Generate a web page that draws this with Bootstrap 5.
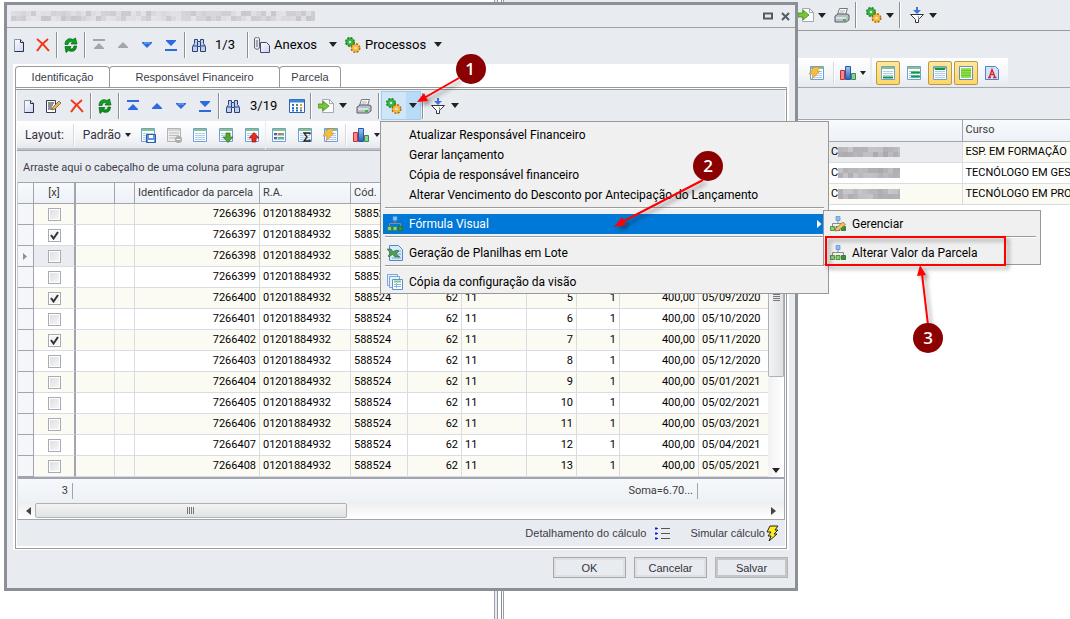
<!DOCTYPE html>
<html lang="pt-BR">
<head>
<meta charset="utf-8">
<meta name="viewport" content="width=device-width, initial-scale=1">
<title>Parcelas</title>
<link href="https://cdn.jsdelivr.net/npm/bootstrap@5.3.0/dist/css/bootstrap.min.css" rel="stylesheet">
<style>
:root{--face:#e8ebf0;--line:#a0a5b0;--cell:#d9dce1;--ui:Roboto,"Noto Sans",sans-serif}
body{font:11px/16px var(--ui);color:#000;background:#fff;overflow-x:hidden}
.desk{min-height:100vh;position:relative}
button{font:inherit;color:inherit;border:0;background:none;padding:0}
svg.ic{width:16px;height:16px;display:block;flex:none}
/* toolbars */
.tool{width:24px;height:24px;display:flex;align-items:center;justify-content:center;flex:none}
.tool.wide{width:26px}
.tool.off{color:#a3a6ab}
.nav-blue{color:#2f6be0}
.vsep{width:2px;height:26px;margin:0 1px;background:#8b8f96;border-right:1px solid #fff;flex:none}
.vsep.soft{height:22px;background:#d5d8dd}
.tri{width:0;height:0;border:4px solid transparent;border-top:5px solid #222;border-bottom:0;flex:none}
.tri.sm{border-width:3px;border-top-width:4px;border-bottom-width:0}
.big{font-size:13px;line-height:16px}
.count-a{width:35px;padding-left:4px}
.count-b{width:40px;padding-left:5px}
.strip{background:linear-gradient(#fff,#f4f5f8 60%,#e6e9ef);height:29px;border-bottom:2px solid #bfc3cb;color:#33333c}
.strip .cap{font-size:12px}
.strips{gap:1px}
.tight{gap:2px}
.tool.on{border:1px solid #b99a4c;border-radius:2px;background:linear-gradient(#ffe79a,#ffd566)}
/* background application */
.app-face{background:var(--face)}
.left-pane{flex:0 0 494px}
.split{flex:0 0 10px;border-left:1px solid #9a9fa9;border-right:1px solid #9a9fa9;background:linear-gradient(90deg,#e8ebf0 2px,#8f96a5 2px,#8f96a5 3px,#fff 3px,#fff 6px,#8f8f8f 6px,#8f8f8f 7px,#fff 7px)}
.app-top{height:31px;border-bottom:1px solid #999;padding-left:290px}
.app-mid{height:89px;border-bottom:1px solid var(--line);padding:27px 0 0 293px}
.app-tools{border-bottom:1px solid #a3a6ab}
.app-tools .strip{border-bottom:0}
.app-grid{table-layout:fixed;width:100%}
.app-grid td,.app-grid th{height:21px;padding:0 3px;border-right:1px solid var(--cell);border-bottom:1px solid var(--cell);white-space:nowrap;overflow:hidden;font-weight:400}
.app-grid td:last-child,.app-grid th:last-child{border-right:0;padding-right:0}
.app-grid th,.grid th{background:linear-gradient(#f8fafc,#edf1f6);border-color:var(--line);color:#3b3b3b}
.app-grid .first{background:#ebecef}
.alt{background:#fbfbf3}
.app-grid td:first-child{padding-left:327px}
/* dialog window */
.win{position:absolute;left:4px;top:2px;width:794px;max-width:100%;border:3px solid #8a9096;background:var(--face)}
.win-title{height:23px;border-bottom:1px solid #a0a0a0}
.win-bar{height:36px;padding-bottom:3px}
.tabs-box{margin:0 6px;padding:2px 2px 1px;background:#fff}
.tabs-box .nav-tabs{border:0}
.tabs-box .nav-link{font:11px/20px "Liberation Sans",Arial,sans-serif;color:#3c3c4a;border:1px solid #999;border-bottom:0;border-radius:4px 4px 0 0;padding:0;height:21px;margin:0 0 0 -1px;background:#fff;text-align:center}
.tabs-box .nav-item:first-child .nav-link{margin-left:0}
.w-a{width:95px}.w-b{width:171px}.w-c{width:62px}
.sheet{border:1px solid #999;border-top:3px double #999;padding:0 1px 2px}
.sheet-in{background:var(--face)}
.bar2{height:31px}
.drop-on{background:#cfe6f9;border:1px solid #a3cdef;height:29px;width:40px;position:relative}
.drop-on .half{background:#b8dcf8;width:15px;height:27px}
.group-hint{height:32px;border-top:1px solid var(--line);padding:9px 6px 0;color:#3b3b4a}
/* parcel grid */
.grid-box{border:1px solid var(--line);border-left-color:#c6cad2;background:#fff}
.grid{table-layout:fixed;width:100%;border-collapse:separate;border-spacing:0}
.grid td,.grid th{height:21px;padding:0 3px;border-right:1px solid var(--cell);border-bottom:1px solid var(--cell);line-height:20px;white-space:nowrap;overflow:hidden;font-weight:400}
.grid th{height:21px;border-color:var(--line)}
.grid td:first-child{background:#f4f6f9;border-color:var(--line)}
.grid td:nth-child(2),.grid th:nth-child(2){border-right:2px solid var(--line)}
.grid tr.cur td:nth-child(2){background:#ebecef}
.grid td:last-child{border-right:0}
.grid input{appearance:none;display:block;margin:0 auto;width:13px;height:13px;border:1px solid #a7abb3;background:linear-gradient(135deg,#dcdde0,#f8f8f8);box-shadow:inset 0 0 0 1px #fff}
.grid input:checked{background:#f4f4f4 url("data:image/svg+xml,%3Csvg xmlns='http://www.w3.org/2000/svg' viewBox='0 0 11 11'%3E%3Cpath d='M2 5l2.5 3.5L9 2' fill='none' stroke='%23333' stroke-width='2'/%3E%3C/svg%3E")}
.vbar{width:16px;margin-top:21px;background:linear-gradient(90deg,#f1f1f1,#fff);flex:none}
.vthumb{height:173px;border:1px solid #aeb2b8;border-top:0;border-radius:0 0 2px 2px;background:linear-gradient(90deg,#f4f4f4,#dfe1e3)}
.grip-v{width:7px;height:8px;margin-top:90px;background:repeating-linear-gradient(#777 0 1px,transparent 1px 2px)}
.grip-h{width:8px;height:7px;background:repeating-linear-gradient(90deg,#777 0 1px,transparent 1px 2px)}
.sums{height:25px;border-top:2px solid var(--line);background:linear-gradient(#f6f8fb,#edf1f6);color:#3b3b3b}
.sums span{border-right:1px solid #a0a5b0;height:16px;text-align:right;padding-right:4px}
.s-a{width:55px}.s-b{width:90px;margin-right:86px}
.hbar{height:17px;background:linear-gradient(#eee,#fff)}
.hthumb{width:312px;height:15px;border:1px solid #aeb2b8;border-radius:2px;background:linear-gradient(#f3f4f2,#e0e3e4)}
.arr{width:0;height:0;border:4px solid transparent}
.arr-l{border-right:5px solid #444;border-left:0}
.arr-r{border-left:5px solid #444;border-right:0}
.foot{font:11px/16px "Liberation Sans",Arial,sans-serif;color:#3c3c4a;height:26px}
.win-foot{height:38px;padding:7px 7px 0;font:11px/16px "Liberation Sans",Arial,sans-serif}
.push{width:73px;height:21px;border:1px solid #a9a9a9;box-shadow:inset 0 0 0 2px #dfdfdf;color:#33333c}
.push.strong{box-shadow:inset 0 0 0 2px #c6c6c6;border-color:#b5b5b5}
/* menus */
.pop{display:block;background:#f0f0f0;border:1px solid #999;border-radius:0;padding:3px 2px 1px;font:12px/20px Roboto,sans-serif;color:#000;margin:0}
.pop .dropdown-item{height:20px;padding:0 4px;display:flex;align-items:center;gap:6px;color:#000;line-height:20px;position:relative}
.pop .dropdown-item.pick{background:#0078d7;color:#fff}
.pop .blank{width:16px;flex:none}
.pop hr{margin:2px 2px 5px;border:0;border-top:1px solid #9b9b9b;border-bottom:1px solid #fff;opacity:1;height:2px}
.pop-main{position:absolute;left:-2px;top:29px;width:449px}
.pop-sub{position:absolute;left:442px;top:88px;width:218px;min-width:0}
.marks{position:absolute;left:0;top:0;width:1070px;height:619px;pointer-events:none;z-index:2000}
.marks text{font:600 17px "Open Sans",sans-serif;fill:#fff;text-anchor:middle}
.win,.dropdown-menu{z-index:10}
</style>
</head>
<body>
<svg width="0" height="0" class="position-absolute" aria-hidden="true"><defs>
<linearGradient id="gb" x2="0" y2="1"><stop stop-color="#9cc8f4"/><stop offset="1" stop-color="#2c5fc0"/></linearGradient>
<linearGradient id="pg" x2="1" y2="1"><stop stop-color="#fff"/><stop offset="1" stop-color="#c9d3ee"/></linearGradient>
<symbol id="new" viewBox="0 0 16 16"><path d="M3.500 2.500h6l3 3v9h-9z" fill="url(#pg)" stroke="#8a94ad"/><path d="M9.500 2.500v3h3M12.500 5v9.500h-9" fill="none" stroke="#27304e"/></symbol>
<symbol id="edit" viewBox="0 0 16 16"><path d="M1.500 2.500h9v12h-9z" fill="#fff" stroke="#333b58"/><path d="M3 5h6M3 7h5M3 9h4M3 11h5" stroke="#222"/><path d="M7 12l1-3 6-6 2 2-6 6z" fill="#e8b35a" stroke="#70502a" stroke-width=".7"/></symbol>
<symbol id="del" viewBox="0 0 16 16"><path d="M2 2c4 3 8 7 12 12M13 2C9 5 5 9 2 14" fill="none" stroke="#f03818" stroke-width="2"/></symbol>
<symbol id="refresh" viewBox="0 0 16 16"><path d="M2 7.500C2 2.500 6 .5 10 2.500L12.500 1l1.500 6H8l1.500-2C7.500 4 5.500 5 5 7.500z" fill="#0aa31d" stroke="#075f10" stroke-width=".7"/><path d="M13.500 9c0 5-4 6.500-8 4.500L3 15.500 2 9.500h6l-1.500 2c2 1 4 0 4.500-2.500z" fill="#08951a" stroke="#075f10" stroke-width=".7"/></symbol>
<symbol id="up" viewBox="0 0 16 16"><path d="M8 5l5 5v1H3v-1z" fill="currentColor"/></symbol>
<symbol id="down" viewBox="0 0 16 16"><path d="M8 11l5-5V5H3v1z" fill="currentColor"/><path d="M5 6h6" stroke="#8ab8f5"/></symbol>
<symbol id="first" viewBox="0 0 16 16"><path d="M2 2h12v2H2zM8 6l5 5v1H3v-1z" fill="currentColor"/></symbol>
<symbol id="last" viewBox="0 0 16 16"><path d="M2 12h12v2H2zM3 3h10v1L8 9 3 4z" fill="currentColor"/></symbol>
<symbol id="binoc" viewBox="0 0 16 16"><path d="M3.500 2.500h3v2h3v-2h3v4l2 3v5h-5v-5h-3v5h-5v-5l2-3z" fill="#bdd1ef" stroke="#283f7c"/><path d="M6.500 5v4M9.500 5v4M2 9h4M10 9h4" stroke="#283f7c"/></symbol>
<symbol id="clip" viewBox="0 0 16 16"><path d="M6.500 5.500h6l3 3v7h-9z" fill="url(#pg)" stroke="#4d4470"/><path d="M.5 2v8c0 3 5 3 5 0V2c0-2.500-5-2.500-5 0M3 3v7" fill="#e6eaf0" stroke="#61656c"/></symbol>
<symbol id="gears" viewBox="0 0 16 16"><circle cx="5" cy="5" r="2.800" fill="none" stroke="#35b53c" stroke-width="3"/><circle cx="5" cy="5" r="4.300" fill="none" stroke="#1d7b22" stroke-width="1.400" stroke-dasharray="2 1.400"/><circle cx="10.500" cy="11" r="2.800" fill="none" stroke="#f7ba38" stroke-width="3"/><circle cx="10.500" cy="11" r="4.300" fill="none" stroke="#a86a11" stroke-width="1.400" stroke-dasharray="2 1.400"/></symbol>
<symbol id="cal" viewBox="0 0 16 16"><path d="M.5 1.500h15v13H.5z" fill="#fff" stroke="#2a63ac"/><path d="M1 3h14" stroke="#3d86d8" stroke-width="3"/><path d="M3 7h2M3 10h2M3 12.500h2M7 12.500h2M11 12.500h2" stroke="#3266d5" stroke-width="2"/><path d="M7 7h2M7 10h2" stroke="#24a04a" stroke-width="2"/><path d="M11 7h2M11 10h2" stroke="#e8963a" stroke-width="2"/></symbol>
<symbol id="export" viewBox="0 0 16 16"><path d="M4.500 1.500h7l4 4v9h-11z" fill="#fafbfc" stroke="#a4a9b0"/><path d="M11.500 1.500v4h4" fill="none" stroke="#a4a9b0"/><path d="M0 6h5V3l6 5-6 5v-3H0z" fill="#77c633" stroke="#468f19" stroke-width=".8"/></symbol>
<symbol id="print" viewBox="0 0 16 16"><path d="M5.500 1.500h8l-2 6h-8z" fill="#fff" stroke="#777"/><path d="M6 4h5M5 6h5" stroke="#aaa"/><path d="M1 9l3-2h9l2 1v5l-3 2H1z" fill="#b9bfc7" stroke="#5b626d"/><path d="M2 11h10" stroke="#fff"/><path d="M9 13h3" stroke="#26c43a" stroke-width="2"/></symbol>
<symbol id="funnel" viewBox="0 0 16 16"><path d="M1.500 7.500h13l-5 5v3h-3v-3z" fill="#fff" stroke="#333"/><path d="M9 9l1 3" stroke="#888"/><path d="M7 0h2v3h3L8 7 4 3h3z" fill="#3b74dd"/></symbol>
<symbol id="tb" viewBox="0 0 16 16"><path d="M1.500 1.500h13v13h-13z" fill="#fff" stroke="#6f9fd6"/><path d="M2 3h12" stroke="#86c67b" stroke-width="2"/><path d="M3 6.500h10M3 8.500h10M3 10.500h10M3 12.500h10" stroke="#a9c6e8"/><path d="M6 6v8M10 6v8" stroke="#d5e3f4"/></symbol>
<symbol id="save" viewBox="0 0 16 16"><use href="#tb"/><path d="M6.500 7.500h9v8h-9z" fill="#5f93d8" stroke="#2b5ca5"/><path d="M9 8h4v3H9zM8 13h6v2H8z" fill="#fff"/></symbol>
<symbol id="tbdel" viewBox="0 0 16 16"><path d="M1.500 1.500h13v13h-13z" fill="#eee" stroke="#b4b4b4"/><path d="M2 3h12M3 6h10M3 8.500h10M3 11h8" stroke="#bbb"/><circle cx="12.500" cy="12.500" r="3.500" fill="#aaa"/><path d="M10.500 12.500h4" stroke="#fff"/></symbol>
<symbol id="tbdn" viewBox="0 0 16 16"><use href="#tb"/><path d="M8 6h4v4h3l-5 5.500L5 10h3z" fill="#55a636" stroke="#2e7418" stroke-width=".7"/></symbol>
<symbol id="tbup" viewBox="0 0 16 16"><use href="#tb"/><path d="M8 15h4v-4h3l-5-5.500L5 11h3z" fill="#e32b20" stroke="#98140e" stroke-width=".7"/></symbol>
<symbol id="tbcol" viewBox="0 0 16 16"><use href="#tb"/><path d="M3 7h3M3 11h3" stroke="#253a66" stroke-width="1.500"/><path d="M7 7h3" stroke="#e03636" stroke-width="1.500"/><path d="M10 7h3M7 11h6" stroke="#35a954" stroke-width="1.500"/></symbol>
<symbol id="sum" viewBox="0 0 16 16"><use href="#tb"/><path d="M13 7.500V6H7l3 4-3 4h6v-1.500" fill="none" stroke="#222" stroke-width="1.300"/></symbol>
<symbol id="flash" viewBox="0 0 16 16"><use href="#tb"/><path d="M5 2h6L8 6h3l-8 8 1-5H0z" fill="#f6bd45" stroke="#c88a1c" stroke-width=".6"/></symbol>
<symbol id="bars" viewBox="0 0 16 16"><path d="M.5 5.500h4v9h-4z" fill="#f08a8a" stroke="#c93030"/><path d="M5.500 1.500h5v13h-5z" fill="url(#gb)" stroke="#2458a8"/><path d="M11.500 8.500h4v6h-4z" fill="#8ed09a" stroke="#3b8b4a"/></symbol>
<symbol id="tbbot" viewBox="0 0 16 16"><use href="#tb"/><path d="M3 12.500h10" stroke="#0c9a43" stroke-width="2"/></symbol>
<symbol id="tbmid" viewBox="0 0 16 16"><use href="#tb"/><path d="M5 7.500h9M5 11.500h9" stroke="#0c9a43" stroke-width="2"/></symbol>
<symbol id="tbtop" viewBox="0 0 16 16"><use href="#tb"/><path d="M3 4h10" stroke="#0c9a43" stroke-width="2"/></symbol>
<symbol id="tbfull" viewBox="0 0 16 16"><path d="M1.500 1.500h13v13h-13z" fill="#fff" stroke="#5d8fc8"/><path d="M3 3h10v10H3z" fill="#8fe04a"/><path d="M3 5.500h10M3 8h10M3 10.500h10" stroke="#6cc32f"/></symbol>
<symbol id="fontA" viewBox="0 0 16 16"><path d="M1.500 1.500h10l3 3v10h-13z" fill="#cfe3fa" stroke="#4f83c4"/><path d="M4 12.500h3M9 12.500h3.500M5.500 12L8 4.500l3 7.500M6.500 9.500h3" fill="none" stroke="#e02424" stroke-width="1.400"/></symbol>
<symbol id="tree" viewBox="0 0 16 16"><path d="M8 4v3M2.500 10V7.500h11V10" fill="none" stroke="#8a8a8a"/><path d="M6 .5h4v4H6z" fill="#8fbdf5" stroke="#5a8ccf" stroke-width=".7"/><path d="M.5 10.500h4v4h-4zM6 10.500h4v4H6z" fill="#8ccf6e" stroke="#3b8030" stroke-width=".8"/><path d="M11.500 10.500h4v4h-4z" fill="#37933a" stroke="#246b28" stroke-width=".8"/></symbol>
<symbol id="treepen" viewBox="0 0 16 16"><use href="#tree"/><path d="M5 15l1-3 7-6 2.500 2.500-7 6z" fill="#f2c26a" stroke="#9a6a22" stroke-width=".7"/></symbol>
<symbol id="excel" viewBox="0 0 16 16"><path d="M2.500.5h9l4 4v11h-13z" fill="#d9ebfb" stroke="#4f8ac8"/><path d="M5 13h9M9 6h5M10 9h4" stroke="#6ea4da"/><path d="M0 4h4l2 2.500L10 5l2 1-3 3 4 3H8L5.500 9.500 2 12l-1-1 2.500-3z" fill="#4f9c57" stroke="#20602a" stroke-width=".5"/></symbol>
<symbol id="copy" viewBox="0 0 16 16"><path d="M.5.500h10v11H.5z" fill="#e9f2fc" stroke="#7aa8de"/><path d="M2.500 2.500h10v11h-10z" fill="#e9f2fc" stroke="#7aa8de"/><path d="M5.500 5.500h10v10h-10z" fill="#fff" stroke="#5d90cf"/><path d="M7 7.500h7" stroke="#80c67c" stroke-width="2"/><path d="M7 10.500h7M7 12.500h7M9.500 9v5" stroke="#8db6e4"/></symbol>
<symbol id="list" viewBox="0 0 16 16"><path d="M2 2v3M2 7v3M2 12v3M1 3.500h3M1 8.500h3M1 13.500h3" stroke="#1717e0"/><path d="M7 3.500h9M7 8.500h9M7 13.500h9" stroke="#555"/></symbol>
<symbol id="bolt" viewBox="0 0 16 16"><path d="M5 1h8L10 5h3L9 9h3l-8 7 2-5H3l3-4H2z" fill="#ffec1e" stroke="#222"/></symbol>
</defs></svg>

<div class="desk d-flex">
  <div class="left-pane"></div>
  <div class="split"></div>
  <main class="flex-grow-1 overflow-hidden">
    <div class="app-face">
      <div class="app-top d-flex align-items-center">
        <button class="tool" data-ic="export" aria-label="Exportar"></button><span class="tri"></span>
        <button class="tool ms-1" data-ic="print" aria-label="Imprimir"></button><span class="vsep"></span>
        <button class="tool ms-1" data-ic="gears" aria-label="Processos"></button><span class="tri me-1"></span><span class="vsep me-1"></span>
        <button class="tool" data-ic="funnel" aria-label="Filtro"></button><span class="tri"></span>
      </div>
      <div class="app-mid">
        <div class="app-tools d-flex tight">
          <div class="strip d-flex align-items-center ps-2"><button class="tool" data-ic="flash" aria-label="Ação"></button><span class="vsep soft ms-1"></span><button class="tool" data-ic="bars" aria-label="Gráfico"></button><span class="tri sm me-1"></span></div>
          <div class="strip d-flex align-items-center tight px-1">
            <button class="tool on" data-ic="tbbot" aria-label="Rodapé"></button><button class="tool" data-ic="tbmid" aria-label="Grupo"></button><button class="tool on" data-ic="tbtop" aria-label="Topo"></button><button class="tool on" data-ic="tbfull" aria-label="Linhas"></button><button class="tool" data-ic="fontA" aria-label="Fonte"></button>
          </div>
        </div>
      </div>
    </div>
    <table class="app-grid"><colgroup><col style="width:458px"><col></colgroup>
      <thead><tr><th></th><th>Curso</th></tr></thead>
      <tbody>
        <tr><td class="first"><div class="d-flex">C<svg class="mosaic" data-w="62" data-h="10" width="62" height="10"></svg></div></td><td class="alt">ESP. EM FORMAÇÃO</td></tr>
        <tr><td><div class="d-flex">C<svg class="mosaic" data-w="62" data-h="10" width="62" height="10"></svg></div></td><td>TECNÓLOGO EM GEST</td></tr>
        <tr class="alt"><td><div class="d-flex">C<svg class="mosaic" data-w="62" data-h="10" width="62" height="10"></svg></div></td><td>TECNÓLOGO EM PRO</td></tr>
      </tbody></table>
  </main>

  <section class="win" role="dialog" aria-label="Parcela">
    <div class="win-title d-flex align-items-center justify-content-between ps-1 pe-1">
      <svg class="mosaic" data-w="304" data-h="10" width="304" height="10"></svg>
      <div class="d-flex gap-2 align-items-center">
        <button aria-label="Maximizar"><svg width="10" height="9" class="d-block"><path d="M1 1.500h8v5H1z" fill="none" stroke="#555c66" stroke-width="2"/></svg></button>
        <button aria-label="Fechar"><svg width="10" height="9" class="d-block"><path d="M1 1l7 7M8 1L1 8" stroke="#555c66" stroke-width="2"/></svg></button>
      </div>
    </div>
    <div class="win-bar d-flex align-items-center">
      <button class="tool" data-ic="new" aria-label="Novo"></button><button class="tool" data-ic="del" aria-label="Excluir"></button><span class="vsep"></span>
      <button class="tool" data-ic="refresh" aria-label="Atualizar"></button><span class="vsep"></span>
      <button class="tool off" data-ic="first" aria-label="Primeiro"></button><button class="tool off" data-ic="up" aria-label="Anterior"></button><button class="tool nav-blue" data-ic="down" aria-label="Próximo"></button><button class="tool nav-blue" data-ic="last" aria-label="Último"></button><span class="vsep"></span>
      <button class="tool" data-ic="binoc" aria-label="Localizar"></button><span class="big count-a">1/3</span><span class="vsep"></span>
      <button class="big d-flex align-items-center ms-1 gap-1" data-ic="clip"><span>Anexos</span><span class="tri ms-2 me-2"></span></button>
      <button class="big d-flex align-items-center gap-1" data-ic="gears"><span>Processos</span><span class="tri ms-1"></span></button>
    </div>
    <div class="tabs-box">
      <ul class="nav nav-tabs">
        <li class="nav-item"><a class="nav-link w-a" href="#">Identificação</a></li>
        <li class="nav-item"><a class="nav-link w-b" href="#">Responsável Financeiro</a></li>
        <li class="nav-item"><a class="nav-link w-c" href="#">Parcela</a></li>
      </ul>
      <div class="sheet"><div class="sheet-in">
        <div class="bar2 d-flex align-items-center">
          <button class="tool" data-ic="new" aria-label="Novo"></button><button class="tool" data-ic="edit" aria-label="Editar"></button><button class="tool" data-ic="del" aria-label="Excluir"></button><span class="vsep"></span>
          <button class="tool" data-ic="refresh" aria-label="Atualizar"></button><span class="vsep"></span>
          <button class="tool nav-blue" data-ic="first" aria-label="Primeiro"></button><button class="tool nav-blue" data-ic="up" aria-label="Anterior"></button><button class="tool nav-blue" data-ic="down" aria-label="Próximo"></button><button class="tool nav-blue" data-ic="last" aria-label="Último"></button><span class="vsep"></span>
          <button class="tool" data-ic="binoc" aria-label="Localizar"></button><span class="big count-b">3/19</span>
          <button class="tool" data-ic="cal" aria-label="Calendário"></button><span class="vsep"></span>
          <button class="tool wide" data-ic="export" aria-label="Exportar"></button><span class="tri"></span><button class="tool wide ms-1" data-ic="print" aria-label="Imprimir"></button><span class="vsep"></span>
          <div class="dropdown drop-on d-flex align-items-center justify-content-between">
            <button class="tool" data-ic="gears" aria-label="Processos"></button><button class="half d-flex align-items-center justify-content-center" aria-label="Abrir processos" aria-expanded="true"><span class="tri"></span></button>
            <div class="dropdown-menu pop pop-main">
              <a class="dropdown-item" href="#"><span class="blank"></span>Atualizar Responsável Financeiro</a>
              <a class="dropdown-item" href="#"><span class="blank"></span>Gerar lançamento</a>
              <a class="dropdown-item" href="#"><span class="blank"></span>Cópia de responsável financeiro</a>
              <a class="dropdown-item" href="#"><span class="blank"></span>Alterar Vencimento do Desconto por Antecipação do Lançamento</a>
              <hr>
              <a class="dropdown-item pick" href="#" data-ic="tree"><span>Fórmula Visual</span><svg class="ms-auto" width="5" height="8"><path d="M0 0l4.500 4L0 8z" fill="#fff"/></svg></a>
              <hr>
              <a class="dropdown-item" href="#" data-ic="excel"><span>Geração de Planilhas em Lote</span></a>
              <hr>
              <a class="dropdown-item" href="#" data-ic="copy"><span>Cópia da configuração da visão</span></a>
              <div class="dropdown-menu pop pop-sub">
                <a class="dropdown-item" href="#" data-ic="treepen"><span>Gerenciar</span></a>
                <hr>
                <a class="dropdown-item" href="#" data-ic="tree"><span>Alterar Valor da Parcela</span></a>
              </div>
            </div>
          </div>
          <span class="vsep"></span><button class="tool wide" data-ic="funnel" aria-label="Filtro"></button><span class="tri"></span>
        </div>
        <div class="d-flex strips">
          <div class="strip d-flex align-items-center ps-2">
            <span class="cap pe-2">Layout:</span><span class="vsep soft me-2"></span>
            <button class="d-flex align-items-center gap-1 me-1"><span class="cap">Padrão</span><span class="tri sm"></span></button>
            <button class="tool wide" data-ic="save" aria-label="Salvar layout"></button><button class="tool wide" data-ic="tbdel" aria-label="Excluir layout"></button><button class="tool wide" data-ic="tb" aria-label="Layout"></button><button class="tool wide" data-ic="tbdn" aria-label="Importar"></button><button class="tool wide" data-ic="tbup" aria-label="Exportar"></button>
          </div>
          <div class="strip d-flex align-items-center">
            <button class="tool wide" data-ic="tbcol" aria-label="Colunas"></button><button class="tool wide" data-ic="sum" aria-label="Somar"></button><button class="tool wide" data-ic="flash" aria-label="Ação"></button><span class="vsep soft"></span><button class="tool wide" data-ic="bars" aria-label="Gráfico"></button><span class="tri sm"></span>
          </div>
        </div>
        <div class="group-hint">Arraste aqui o cabeçalho de uma coluna para agrupar</div>
        <div class="grid-box">
          <div class="d-flex">
            <table class="grid flex-grow-1">
              <colgroup><col style="width:16px"><col style="width:42px"><col style="width:39px"><col style="width:20px"><col style="width:125px"><col style="width:91px"><col style="width:57px"><col style="width:54px"><col style="width:65px"><col style="width:50px"><col style="width:43px"><col style="width:79px"><col></colgroup>
              <thead><tr><th></th><th class="text-center">[x]</th><th></th><th></th><th>Identificador da parcela</th><th>R.A.</th><th>Cód.</th><th></th><th></th><th></th><th></th><th></th><th></th></tr></thead>
              <tbody id="rows"></tbody>
            </table>
            <div class="vbar d-flex flex-column justify-content-between">
              <div class="vthumb d-flex justify-content-center"><span class="grip-v"></span></div>
              <span class="tri align-self-center mb-1"></span>
            </div>
          </div>
          <div class="sums d-flex align-items-center"><span class="s-a">3</span><span class="s-b ms-auto">Soma=6.70...</span></div>
          <div class="hbar d-flex align-items-center gap-1 px-2">
            <span class="arr arr-l"></span>
            <div class="hthumb d-flex align-items-center justify-content-center"><span class="grip-h"></span></div>
            <span class="arr arr-r ms-auto"></span>
          </div>
        </div>
        <div class="foot d-flex align-items-center justify-content-end">
          <button class="d-flex align-items-center gap-2 me-3">Detalhamento do cálculo <svg class="ic"><use href="#list"/></svg></button>
          <button class="d-flex align-items-center me-1 ps-1">Simular cálculo <svg class="ic"><use href="#bolt"/></svg></button>
        </div>
      </div></div>
    </div>
    <div class="win-foot d-flex justify-content-end gap-2"><button class="push">OK</button><button class="push">Cancelar</button><button class="push strong">Salvar</button></div>
  </section>

  <svg class="marks" viewBox="0 0 1070 619">
    <defs><filter id="sh" x="-30%" y="-30%" width="160%" height="160%"><feDropShadow dx="3" dy="3" stdDeviation="2" flood-color="#000" flood-opacity=".4"/></filter></defs>
    <g filter="url(#sh)" stroke="#f00" stroke-width="2" fill="#f00">
      <path d="M459 78L424 98M703 180L622 222M928 325L922 274" fill="none"/>
      <path d="M417 102l7-9 4 8zM614 227l8-10 4 8zM920 265l6 10-9 1z" stroke="none"/>
      <path d="M826 237h179v28H826z" fill="none"/>
    </g>
    <g fill="#8b0000"><circle cx="471" cy="69" r="15"/><circle cx="708" cy="166" r="15"/><circle cx="928" cy="338" r="15"/></g>
    <text x="470" y="75">1</text><text x="708" y="172">2</text><text x="928" y="344">3</text>
  </svg>
</div>
<script src="https://cdn.jsdelivr.net/npm/bootstrap@5.3.0/dist/js/bootstrap.bundle.min.js"></script>
<script>
// icons from the sprite
document.querySelectorAll('[data-ic]').forEach(function(b){
  b.insertAdjacentHTML('afterbegin','<svg class="ic"><use href="#'+b.dataset.ic+'"/></svg>');
});
// redacted text blocks
document.querySelectorAll('.mosaic').forEach(function(s,k){
  var h='',w=+s.dataset.w,t=+s.dataset.h,n=7+k;
  for(var x=0;x<w;x+=5)for(var y=0;y<t;y+=5){n=(n*73+41)%509;var g=(w>100?200:170)+n%30;h+='<rect x="'+x+'" y="'+y+'" width="5" height="5" fill="rgb('+g+','+g+','+(g+4)+')"/>';}
  s.innerHTML=h;
  s.classList.add('align-self-center');
});
// parcels: id, checked, number, due date (only the columns left of the menu for the first rows)
var data=[[7266396],[7266397,1],[7266398],[7266399],[7266400,1,5,'05/09/2020'],[7266401,0,6,'05/10/2020'],[7266402,1,7,'05/11/2020'],[7266403,0,8,'05/12/2020'],[7266404,0,9,'05/01/2021'],[7266405,0,10,'05/02/2021'],[7266406,0,11,'05/03/2021'],[7266407,0,12,'05/04/2021'],[7266408,0,13,'05/05/2021']];
document.getElementById('rows').innerHTML=data.map(function(r,i){
  var rest=r[2]?['62','11',r[2],'1','400,00',r[3]]:['','','','','',''];
  return '<tr class="'+(i%2?'':'alt')+(i==2?' cur':'')+'"><td>'+(i==2?'<svg width="5" height="7" class="d-block mx-auto"><path d="M0 0l4 3.500L0 7z" fill="#8a919d"/></svg>':'')+'</td><td><input type="checkbox" aria-label="'+r[0]+'"'+(r[1]?' checked':'')+'></td><td></td><td></td><td class="text-end">'+r[0]+'</td><td>01201884932</td><td>588524</td>'+
  rest.map(function(v,j){return '<td'+(j==1||j==5?'':' class="text-end"')+'>'+v+'</td>'}).join('')+'</tr>';
}).join('');
</script>
</body>
</html>
